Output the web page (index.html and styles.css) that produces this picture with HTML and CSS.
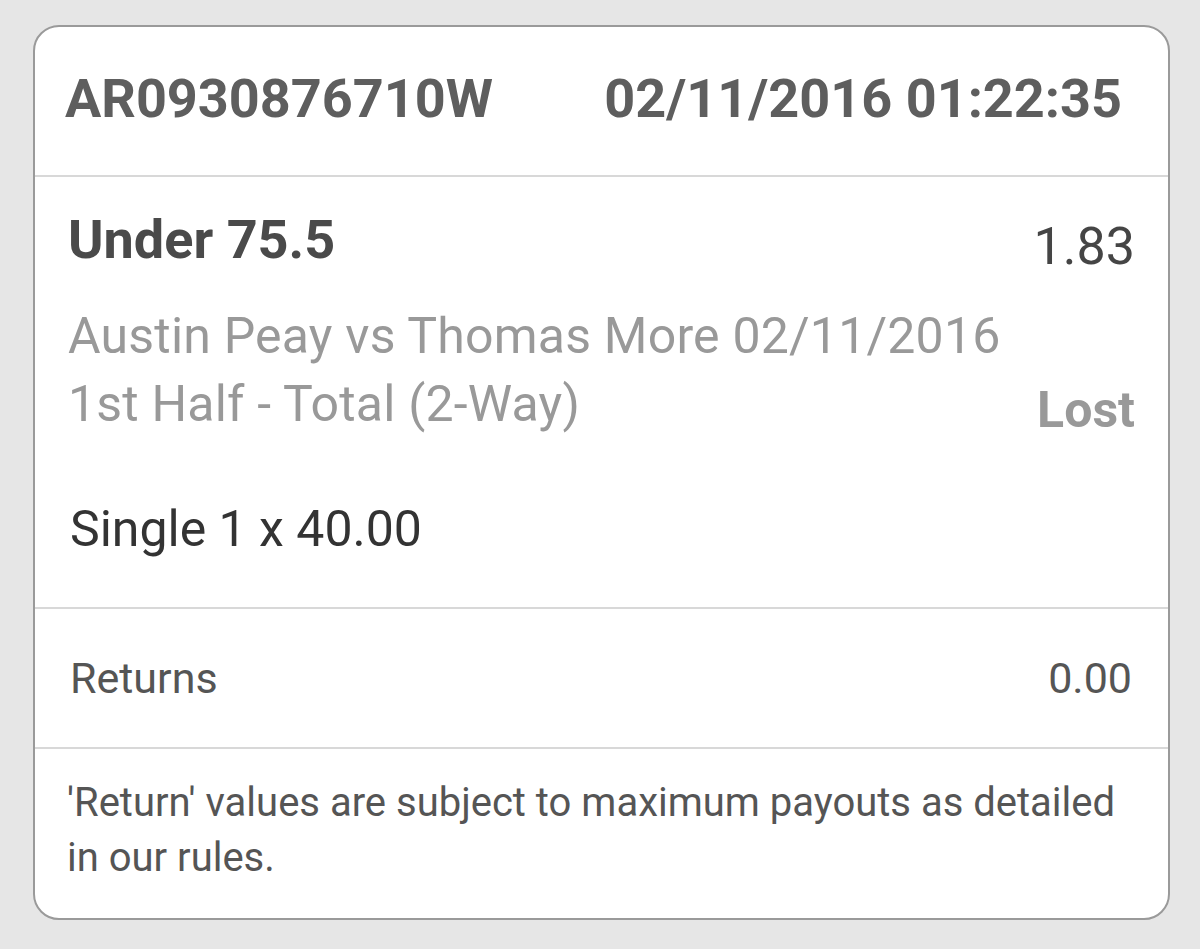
FILE: index.html
```html
<!DOCTYPE html>
<html lang="en">
<head>
    <meta charset="UTF-8">
    <meta name="viewport" content="width=device-width, initial-scale=1.0">
    <title>Bet Receipt</title>
    <link rel="stylesheet" href="styles.css">
</head>
<body>

    <div class="ticket">

        <div class="ticket-header">
            <span class="ticket-id">AR0930876710W</span>
            <span class="ticket-date">02/11/2016 01:22:35</span>
        </div>

        <div class="selection">
            <div class="selection-top">
                <span class="selection-name">Under 75.5</span>
                <span class="odds">1.83</span>
            </div>

            <div class="selection-details">
                <div class="event">
                    <div>Austin Peay vs Thomas More 02/11/2016</div>
                    <div>1st Half - Total (2-Way)</div>
                </div>
                <span class="result">Lost</span>
            </div>

            <div class="stake">Single 1 x 40.00</div>
        </div>

        <div class="returns">
            <span>Returns</span>
            <span>0.00</span>
        </div>

        <div class="note">
            'Return' values are subject to maximum payouts as detailed in our rules.
        </div>

    </div>

</body>
</html>
```

FILE: styles.css
```css
body {
    margin: 0;
    padding: 0;
    background-color: #e6e6e6;
    font-family: Roboto, "Liberation Sans", Arial, sans-serif;
}

.ticket {
    margin: 25px 30px 29px 33px;
    background-color: #fff;
    border: 2px solid #9a9a9a;
    border-radius: 26px;
    overflow: hidden;
}

.ticket-header {
    display: flex;
    justify-content: space-between;
    padding: 42px 46px 46px 30px;
    border-bottom: 2px solid #d8d8d8;
    font-size: 54px;
    line-height: 60px;
    font-weight: bold;
    color: #5e5e5e;
}

.selection {
    padding: 33px 33px 44px 33px;
    border-bottom: 2px solid #d8d8d8;
}

.selection-top {
    display: flex;
    justify-content: space-between;
    align-items: flex-start;
}

.selection-name {
    font-size: 54px;
    line-height: 60px;
    font-weight: bold;
    color: #4a4a4a;
}

.odds {
    margin-top: 7px;
    font-size: 52px;
    line-height: 60px;
    color: #454545;
}

.selection-details {
    display: flex;
    justify-content: space-between;
    align-items: flex-end;
    margin-top: 25px;
}

.event {
    font-size: 50px;
    line-height: 68px;
    letter-spacing: 0.2px;
    color: #999;
}

.result {
    font-size: 50px;
    line-height: 56px;
    font-weight: bold;
    color: #999;
}

.stake {
    margin-top: 57px;
    padding-left: 2px;
    font-size: 50px;
    line-height: 68px;
    color: #333;
}

.returns {
    display: flex;
    justify-content: space-between;
    padding: 40px 36px 40px 35px;
    border-bottom: 2px solid #d8d8d8;
    font-size: 43px;
    line-height: 58px;
    color: #555;
}

.note {
    padding: 26px 45px 33px 32px;
    font-size: 40px;
    line-height: 55px;
    color: #555;
}
```
